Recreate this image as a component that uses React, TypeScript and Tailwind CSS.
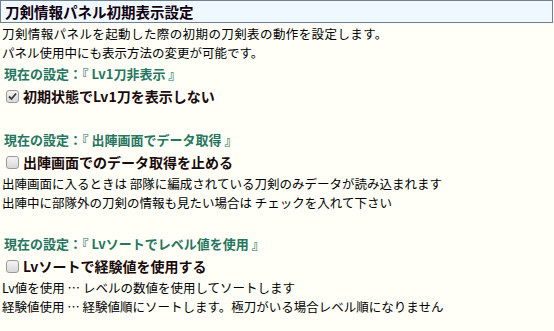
const font = "font-['MS_PGothic','Noto_Sans_CJK_JP',sans-serif]";

function Box({ checked }: { checked?: boolean }) {
  return (
    <span className="inline-flex items-center justify-center w-[13px] h-[13px] rounded-[3px] border border-[#9a9a9a] bg-gradient-to-b from-[#f4f4f4] to-[#d8d8d8] mr-[4px] shrink-0">
      {checked && (
        <svg width="9" height="9" viewBox="0 0 9 9">
          <path d="M1 4.5 L3.5 7 L8 1.5" fill="none" stroke="#3a3a3a" strokeWidth="1.8" />
        </svg>
      )}
    </span>
  );
}

function Setting({ value }: { value: string }) {
  return (
    <div className="h-[23px] flex items-center pl-[4px] text-[13px] font-bold text-[#26755f]">
      現在の設定：『 {value} 』
    </div>
  );
}

function Check({ label, checked }: { label: string; checked?: boolean }) {
  return (
    <div className="h-[23px] flex items-center pl-[6px] text-[14px] font-bold text-[#1a0a0a]">
      <Box checked={checked} />
      {label}
    </div>
  );
}

function Line({ children }: { children: React.ReactNode }) {
  return <div className="h-[19px] leading-[19px] pl-[2px] text-[12.5px] text-black whitespace-nowrap">{children}</div>;
}

export default function App() {
  return (
    <div className={`w-[554px] h-[331px] bg-[#fffff8] overflow-hidden ${font}`}>
      <div className="w-[553px] h-[23px] border border-[#708090] bg-[#f0f8ff] flex items-center pl-[4px] text-[14.5px] font-bold text-[#100010]">
        刀剣情報パネル初期表示設定
      </div>
      <div className="pt-[1px]">
        <Line>
          <span className="tracking-[0.4px]">刀剣情報パネルを起動した際の初期の刀剣表の動作を設定します。</span>
        </Line>
        <Line>パネル使用中にも表示方法の変更が可能です。</Line>
      </div>
      <Setting value="Lv1刀非表示" />
      <Check label="初期状態でLv1刀を表示しない" checked />

      <div className="mt-[20px]">
        <Setting value="出陣画面でデータ取得" />
        <Check label="出陣画面でのデータ取得を止める" />
        <Line>出陣画面に入るときは 部隊に編成されている刀剣のみデータが読み込まれます</Line>
        <Line>出陣中に部隊外の刀剣の情報も見たい場合は チェックを入れて下さい</Line>
      </div>

      <div className="mt-[20px]">
        <Setting value="Lvソートでレベル値を使用" />
        <Check label="Lvソートで経験値を使用する" />
        <Line>Lv値を使用 ⋯ レベルの数値を使用してソートします</Line>
        <Line>経験値使用 ⋯ 経験値順にソートします。極刀がいる場合レベル順になりません</Line>
      </div>
    </div>
  );
}
